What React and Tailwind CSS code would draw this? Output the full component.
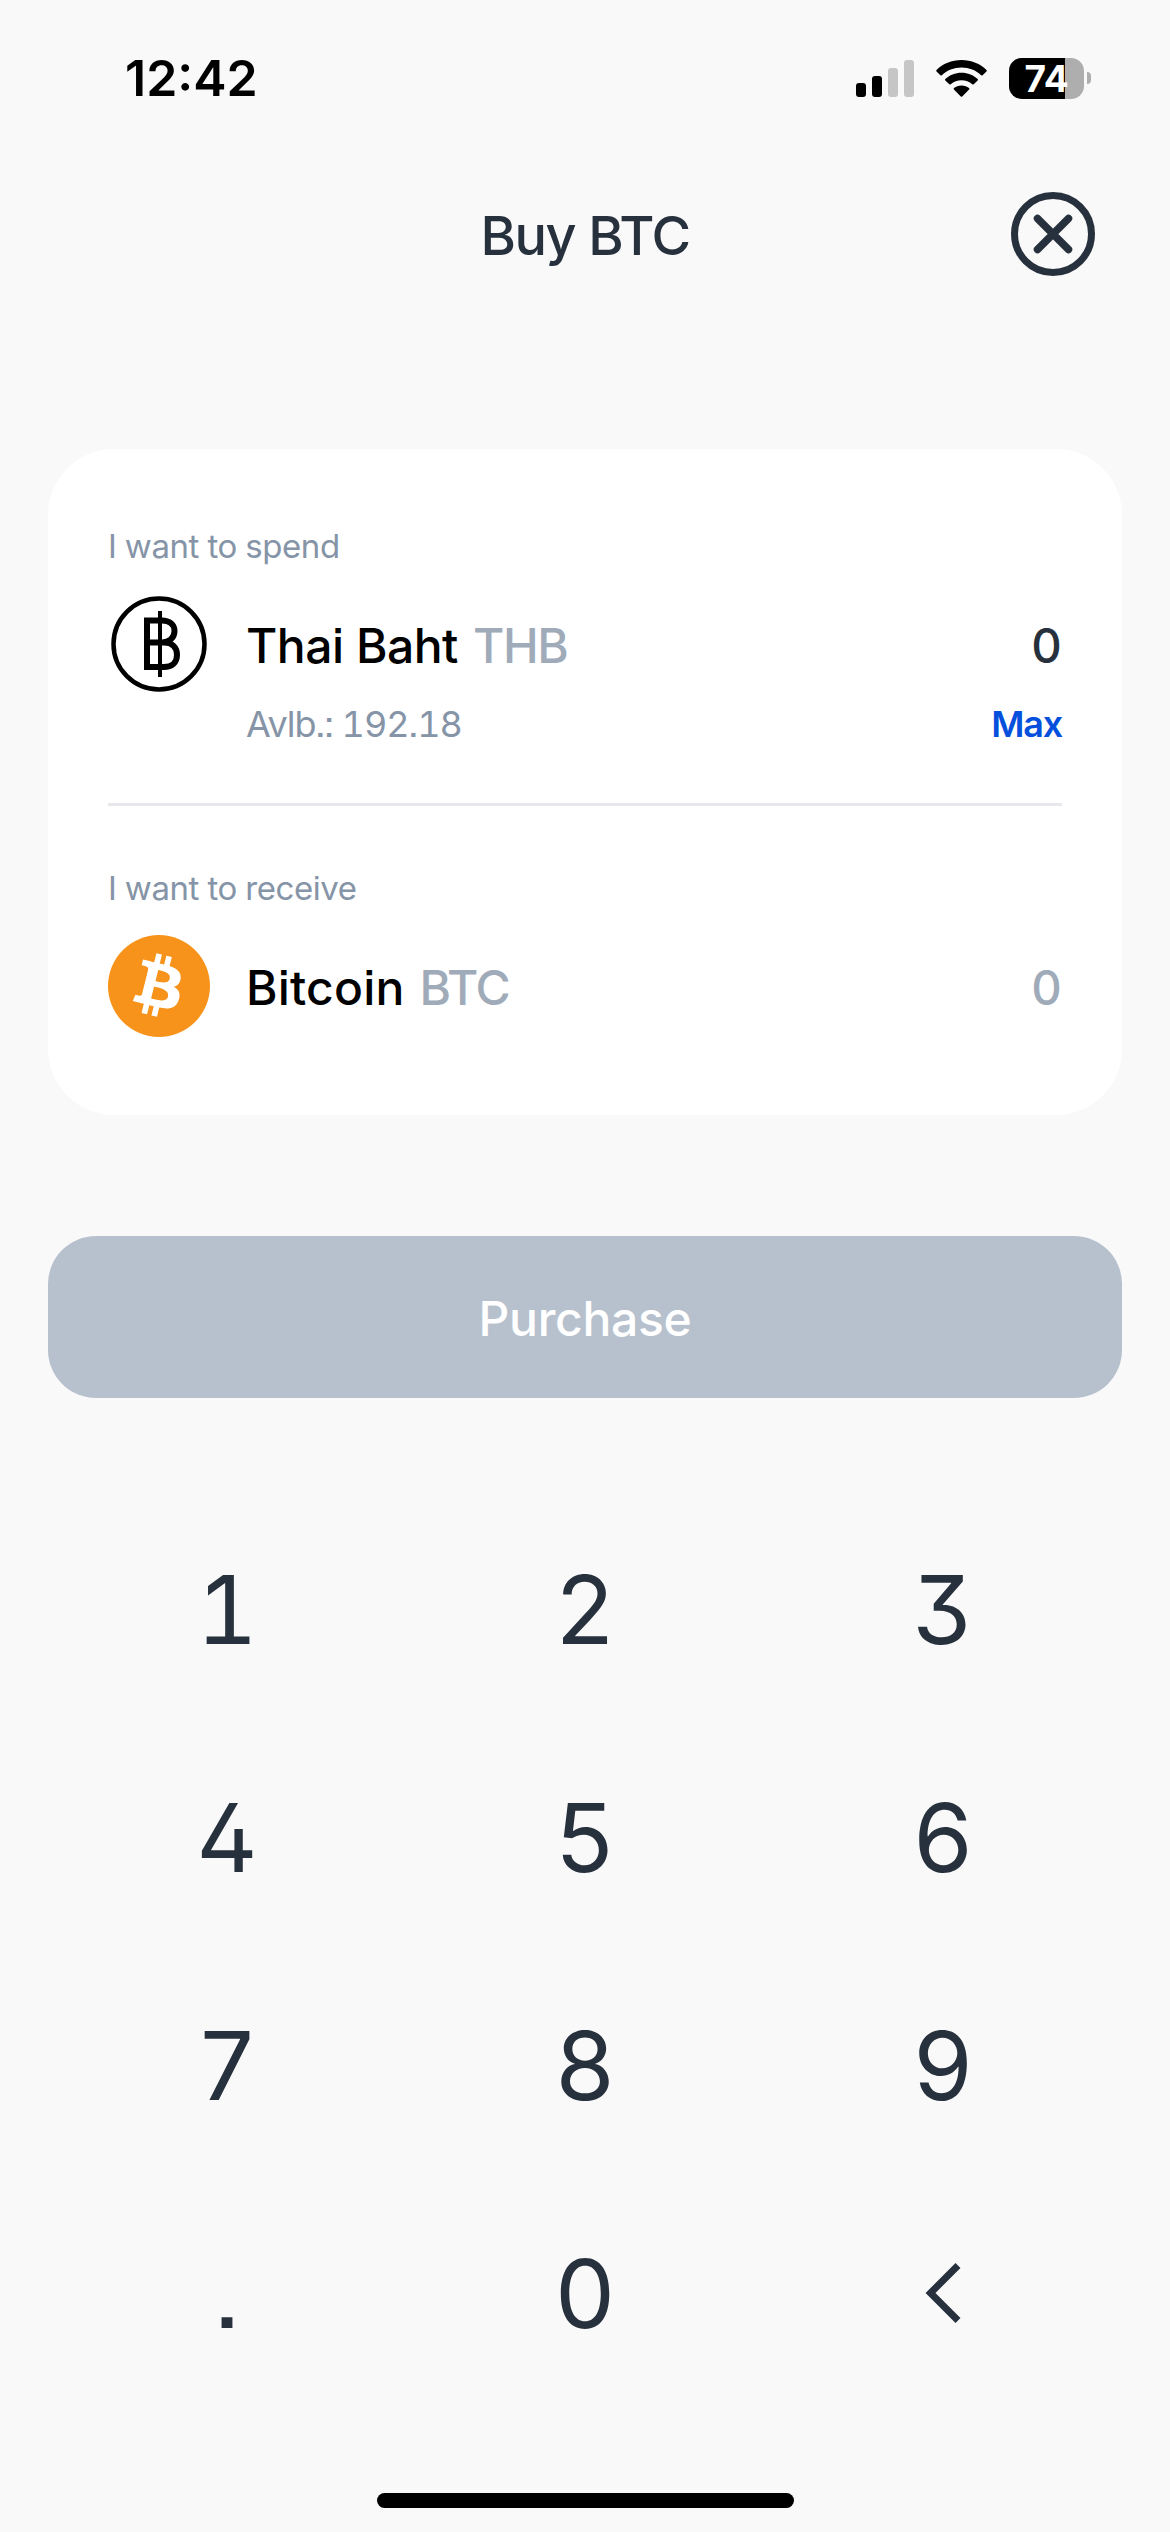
import React from 'react';

const KEYS = ['1', '2', '3', '4', '5', '6', '7', '8', '9', '.', '0', 'back'];

function SignalIcon() {
  return (
    <svg width="58" height="37" viewBox="0 0 58 37">
      <rect x="0" y="23" width="10" height="14" rx="3" fill="#000" />
      <rect x="16" y="16" width="10" height="21" rx="3" fill="#000" />
      <rect x="32" y="8" width="10" height="29" rx="3" fill="#c6c6c6" />
      <rect x="48" y="0" width="10" height="37" rx="3" fill="#c6c6c6" />
    </svg>
  );
}

function WifiIcon() {
  return (
    <svg width="51" height="37" viewBox="0 0 51 37">
      <path d="M25.5 0C35.3 0 44.3 3.8 50.5 10C50.9 10.4 50.9 11 50.5 11.4L46.6 15.3C46.2 15.7 45.6 15.7 45.2 15.3C40 10.4 33.1 7.6 25.5 7.6S11 10.4 5.8 15.3C5.4 15.7 4.8 15.7 4.4 15.3L.5 11.4C.1 11 .1 10.4 .5 10C6.7 3.8 15.7 0 25.5 0Z" />
      <path d="M25.5 12.7C31.8 12.7 37.5 15.1 41.7 19C42.1 19.4 42.1 20 41.7 20.4L37.7 24.3C37.3 24.7 36.7 24.7 36.3 24.3C33.4 21.7 29.6 20.2 25.5 20.2S17.6 21.7 14.7 24.3C14.3 24.7 13.7 24.7 13.3 24.3L9.3 20.4C8.9 20 8.9 19.4 9.3 19C13.5 15.1 19.2 12.7 25.5 12.7Z" />
      <path d="M25.5 25.4C28.4 25.4 31 26.4 33 28.1C33.5 28.5 33.5 29.1 33.1 29.5L26.2 36.4C25.8 36.8 25.2 36.8 24.8 36.4L17.9 29.5C17.5 29.1 17.5 28.5 18 28.1C20 26.4 22.6 25.4 25.5 25.4Z" />
    </svg>
  );
}

function Battery() {
  return (
    <div className="flex items-center gap-[3px]">
      <div className="relative flex h-[41px] w-[75px] items-center justify-center rounded-[13px] bg-[#aeaeae]">
        <div className="absolute inset-y-0 left-0 w-[56px] rounded-l-[13px] bg-black" />
        <span className="relative text-[37px] leading-[41px] font-bold tracking-[-0.2px] text-white">74</span>
      </div>
      <div className="h-[12px] w-[4px] rounded-r-full bg-[#aeaeae]" />
    </div>
  );
}

function CloseIcon() {
  return (
    <svg width="84" height="84" viewBox="0 0 84 84" fill="none" stroke="#27313e">
      <circle cx="42" cy="42" r="38.5" strokeWidth="7" />
      <path d="M26.5 26.5L57.5 57.5M57.5 26.5L26.5 57.5" strokeWidth="7.5" strokeLinecap="round" />
    </svg>
  );
}

function BahtIcon() {
  return (
    <svg width="102" height="102" viewBox="0 0 102 102" fill="none" stroke="#000">
      <circle cx="51" cy="51" r="45.5" strokeWidth="4.5" />
      <path
        d="M39 27.5H54C61.5 27.5 66.5 31.5 66.5 38S61.5 49.5 54 49.5H39M54 49.5H56C63.5 49.5 69 54 69 62S63.5 74 56 74H39V27.500"
        strokeWidth="6"
        strokeLinejoin="miter"
        strokeLinecap="square"
      />
      <path d="M52 18V84" strokeWidth="4" />
    </svg>
  );
}

function BitcoinIcon() {
  return (
    <svg width="102" height="102" viewBox="0 0 32 32">
      <circle cx="16" cy="16" r="16" fill="#f7931a" />
      <path
        fill="#fff"
        transform="translate(-0.4 -0.3)"
        d="M23.189 14.02c.314-2.096-1.283-3.223-3.465-3.975l.708-2.84-1.728-.43-.69 2.765c-.454-.114-.92-.22-1.385-.326l.695-2.783L15.596 6l-.708 2.839c-.376-.086-.746-.17-1.104-.26l.002-.009-2.384-.595-.46 1.846s1.283.294 1.256.312c.7.175.826.638.805 1.006l-.806 3.235c.048.012.11.03.18.057l-.183-.045-1.13 4.532c-.086.212-.303.531-.793.41.018.025-1.256-.313-1.256-.313l-.858 1.978 2.25.561c.418.105.828.215 1.231.318l-.715 2.872 1.727.43.708-2.84c.472.127.93.245 1.378.357l-.706 2.828 1.728.43.715-2.866c2.948.558 5.164.333 6.097-2.333.752-2.146-.037-3.385-1.588-4.192 1.13-.26 1.98-1.003 2.207-2.538zm-3.95 5.538c-.533 2.147-4.148.986-5.32.695l.95-3.805c1.172.293 4.929.872 4.37 3.11zm.535-5.569c-.487 1.953-3.495.96-4.47.717l.86-3.45c.975.243 4.118.696 3.61 2.733z"
      />
    </svg>
  );
}

function CurrencyRow({ icon, name, code, amount, amountColor }) {
  return (
    <div className="mt-[27px] flex h-[102px] items-center">
      {icon}
      <div className="ml-[36px] flex flex-1 items-center pt-[3px] text-[48px] leading-none font-medium">
        {name}
        {code}
        <span className={`ml-auto ${amountColor}`}>{amount}</span>
      </div>
    </div>
  );
}

export default function App() {
  return (
    <div className="flex h-[2532px] w-[1170px] flex-col overflow-hidden bg-[#f9f9f9] font-['Inter',sans-serif] text-[#27313e]">
      <div className="flex h-[156px] shrink-0 items-center pr-[79px] pl-[125px] text-black">
        <span className="text-[50px] leading-none font-semibold">12:42</span>
        <div className="ml-auto flex items-center">
          <SignalIcon />
          <div className="ml-[22px]">
            <WifiIcon />
          </div>
          <div className="ml-[22px]">
            <Battery />
          </div>
        </div>
      </div>

      <div className="grid h-[156px] shrink-0 grid-cols-[1fr_auto_1fr] items-center pr-[75px] pl-[75px]">
        <h1 className="col-start-2 pt-[3px] text-[54px] leading-none font-medium tracking-[-1.4px]">Buy BTC</h1>
        <button className="justify-self-end">
          <CloseIcon />
        </button>
      </div>

      <div className="mx-12 mt-[137px] h-[666px] shrink-0 rounded-[66px] bg-white px-[60px] pt-[77px] [font-feature-settings:'tnum','cv02','cv09','ss07']">
        <p className="text-[33px] leading-[40px] tracking-[-0.43px] text-[#8694a7]">I want to spend</p>
        <CurrencyRow
          icon={<BahtIcon />}
          name={<span className="tracking-[-0.5px] text-black">Thai Baht</span>}
          code={<span className="ml-[15px] tracking-[-1.4px] text-[#a0abba]">THB</span>}
          amount="0"
          amountColor="text-[#27313e]"
        />
        <div className="mt-[9px] ml-[138px] flex justify-between text-[36px] leading-[40px]">
          <span className="tracking-[-1px] text-[#8694a7]">Avlb.: 192.18</span>
          <span className="font-semibold tracking-[-1.2px] text-[#0450dc]">Max</span>
        </div>
        <div className="mt-[59px] h-[3px] bg-[#e7e8eb]" />
        <p className="mt-[62px] text-[33px] leading-[40px] tracking-[-0.43px] text-[#8694a7]">I want to receive</p>
        <CurrencyRow
          icon={<BitcoinIcon />}
          name={<span className="tracking-[0.2px] text-black">Bitcoin</span>}
          code={<span className="ml-[15px] tracking-[-1.4px] text-[#a0abba]">BTC</span>}
          amount="0"
          amountColor="text-[#a0abba]"
        />
      </div>

      <button className="mx-12 mt-[121px] flex h-[162px] shrink-0 items-center justify-center rounded-[48px] bg-[#b7c1ce] pt-[3px] text-[48px] leading-none font-medium tracking-[-0.3px] text-white">
        Purchase
      </button>

      <div className="mx-12 mt-[97px] grid shrink-0 grid-cols-3 text-[95px] leading-none [font-feature-settings:'tnum','cv02','cv09','ss07']">
        {KEYS.map((key) => (
          <button key={key} className="flex h-[228px] items-center justify-center">
            {key === 'back' ? (
              <svg width="36" height="60" viewBox="0 0 36 60" fill="none" stroke="#27313e" strokeWidth="7">
                <path d="M33 2.5L5.5 30L33 57.5" />
              </svg>
            ) : (
              key
            )}
          </button>
        ))}
      </div>

      <div className="mx-auto mt-[86px] h-[15px] w-[417px] shrink-0 rounded-full bg-black" />
    </div>
  );
}
